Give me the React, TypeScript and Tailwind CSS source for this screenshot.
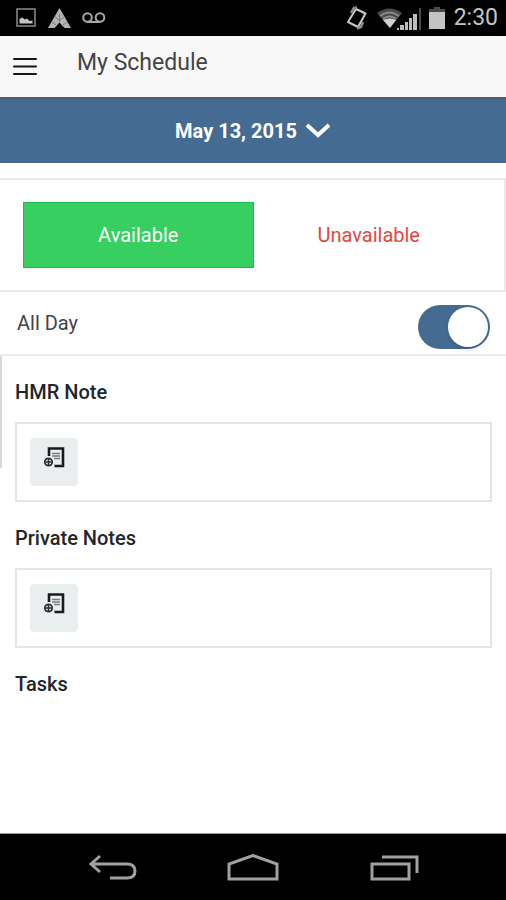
import { useState } from "react";

function StatusBar() {
  return (
    <div className="flex h-9 shrink-0 items-center justify-between bg-black pr-2 pl-4 text-[#c4c4c4]">
      <div className="flex items-center gap-3">
        <svg width="20" height="20" viewBox="0 0 20 20" fill="none" aria-hidden="true">
          <rect x="1" y="1" width="18" height="17" stroke="#8c8c8c" strokeWidth="1.500" />
          <path d="M3.500 15.500V11L6 9.500L9 11.500L11 10.500L13.500 13L16.500 12.500V15.500Z" fill="#c4c4c4" />
        </svg>
        <svg width="24" height="22" viewBox="0 0 24 22" aria-hidden="true">
          <path d="M11.500 1L23 21H16.500L11.500 15.500L6.500 21H0Z" fill="#b4b4b4" />
          <path d="M11.500 7V15M7 10L11 13M16 10L12 13M4 15L8 18M19 15L15 18" stroke="#7a7a7a" strokeWidth="1" />
        </svg>
        <svg className="-ml-0.5" width="24" height="14" viewBox="0 0 24 14" fill="none" stroke="#a8a8a8" strokeWidth="2" aria-hidden="true">
          <circle cx="5.500" cy="6.500" r="4.300" />
          <circle cx="18" cy="6.500" r="4.300" />
          <path d="M5 11H18" />
        </svg>
      </div>
      <div className="flex items-center">
        <svg width="22" height="26" viewBox="0 0 22 26" fill="none" aria-hidden="true">
          <path d="M10 4L19.500 8.500L12 22L2 17Z" stroke="#c9c9c9" strokeWidth="2" strokeLinejoin="round" />
          <path d="M5 8L8 3L11 2.500M17 17L15 22L11 23.500" stroke="#8c8c8c" strokeWidth="2.500" />
        </svg>
        <svg className="ml-2" width="48" height="26" viewBox="0 0 48 26" aria-hidden="true">
          <path d="M1 8Q13.500 -1 26 8L14 23Z" fill="#4b4b4b" />
          <path d="M4 11Q13.500 4 23 11M7 14Q13.500 9 20 14" stroke="#8a8a8a" strokeWidth="2" fill="none" />
          <path d="M7 15Q14 12 20 15L14 23Z" fill="#d0d0d0" />
          <path d="M21 25V23H23V25M24 25V20H28V25M29 25V17H32V25M33 25V13H36V25M37 25V9H41V25" fill="#bdbdbd" />
          <path d="M44 25V3" stroke="#4b4b4b" strokeWidth="2" />
        </svg>
        <svg className="ml-1" width="18" height="24" viewBox="0 0 18 24" aria-hidden="true">
          <path d="M6 1H12V3H17V6H1V3H6Z" fill="#4b4b4b" />
          <path d="M1 6H17V23H1Z" fill="#c4c4c4" />
        </svg>
        <time className="ml-2 text-[23px] leading-9">2:30</time>
      </div>
    </div>
  );
}

function NoteIcon() {
  return (
    <svg width="24" height="24" viewBox="0 0 24 24" fill="none" aria-hidden="true">
      <path d="M7 10V2.500H21V20H12.500" stroke="#171b1e" strokeWidth="2.600" />
      <path d="M10 7.500H18M10 10H18M12 12.500H18" stroke="#777c7e" strokeWidth="1.500" />
      <circle cx="6.500" cy="16" r="3.700" stroke="#2b3033" strokeWidth="1.800" />
      <path d="M6.500 13V19M3.500 16H9.500" stroke="#2b3033" strokeWidth="1.600" />
    </svg>
  );
}

function NoteSection({ title }: { title: string }) {
  return (
    <section className="mb-[22px]">
      <h2 className="mb-4 text-xl leading-7 font-medium text-[#20262d]">{title}</h2>
      <div className="flex h-20 border-2 border-[#e4e5e6] px-[13px] py-[14px]">
        <button type="button" aria-label={`Add to ${title}`} className="flex size-12 justify-center rounded-sm bg-[#eaeeef] pt-2">
          <NoteIcon />
        </button>
      </div>
    </section>
  );
}

export default function App() {
  const [available, setAvailable] = useState(true);
  const [allDay, setAllDay] = useState(true);
  const on = "border border-[#20b950] bg-[#36cf60] text-white";
  const off = "text-[#e5483d]";

  return (
    <div className="flex min-h-screen flex-col bg-white font-['Roboto','Liberation_Sans',sans-serif] text-[#444]">
      <StatusBar />
      <header className="flex h-[61px] shrink-0 items-center bg-[#f8f8f8] px-3">
        <button type="button" aria-label="Open menu" className="flex h-8 w-7 items-center">
          <svg width="26" height="20" viewBox="0 0 26 20" aria-hidden="true">
            <path d="M2 2H24M2 9.500H24M2 17H24" stroke="#151515" strokeWidth="2" strokeLinecap="round" />
          </svg>
        </button>
        <h1 className="mb-2 ml-[37px] text-[23px] leading-8">My Schedule</h1>
      </header>
      <button type="button" className="flex h-[66px] shrink-0 items-center justify-center gap-2 border-t-2 border-[#4d5d6e] bg-[#466b92] text-xl font-bold text-white">
        May 13, 2015
        <svg width="26" height="16" viewBox="0 0 26 16" fill="none" aria-hidden="true">
          <path d="M2 2L13 12L24 2" stroke="white" strokeWidth="4" />
        </svg>
      </button>
      <main className="relative flex grow flex-col">
        <div className="mt-[15px] grid grid-cols-2 border-2 border-l-0 border-[#e9e9e9] pr-5 pl-[23px] py-[22px] text-xl">
          <button type="button" aria-pressed={available} onClick={() => setAvailable(true)} className={`h-[66px] ${available ? on : off}`}>
            Available
          </button>
          <button type="button" aria-pressed={!available} onClick={() => setAvailable(false)} className={`h-[66px] ${available ? off : on}`}>
            Unavailable
          </button>
        </div>
        <label className="flex h-[64px] items-center justify-between border-b-2 border-[#ececec] pr-4 pl-[17px]">
          <span className="text-xl leading-7">All Day</span>
          <input
            type="checkbox"
            role="switch"
            checked={allDay}
            onChange={(e) => setAllDay(e.target.checked)}
            className="mt-2 h-11 w-[72px] appearance-none rounded-full bg-gray-300 p-0.5 before:block before:size-10 before:rounded-full before:bg-white before:shadow-md checked:bg-[#466b92] checked:before:ml-7"
          />
        </label>
        <div className="relative pt-[22px] pr-[14px] pl-[15px]">
          <div className="absolute top-0 left-0 h-28 w-0.5 bg-[#d8d8d8]" />
          <NoteSection title="HMR Note" />
          <NoteSection title="Private Notes" />
          <h2 className="text-xl leading-7 font-medium text-[#20262d]">Tasks</h2>
        </div>
      </main>
      <nav className="flex h-[67px] shrink-0 items-center justify-center gap-[89px] border-t border-[#999] bg-black pt-1">
        <button type="button" aria-label="Back">
          <svg width="50" height="30" viewBox="0 0 50 30" fill="none" stroke="#a0a0a0" strokeWidth="3" aria-hidden="true">
            <path d="M13 2L4 10L13 18M5 10H40Q48 10 48 17Q48 24 40 24H23" />
          </svg>
        </button>
        <button type="button" aria-label="Home">
          <svg width="54" height="30" viewBox="0 0 54 30" fill="none" stroke="#a0a0a0" strokeWidth="3" aria-hidden="true">
            <path d="M3 25V10L27 1.500L51 10V25Z" />
          </svg>
        </button>
        <button type="button" aria-label="Recent apps">
          <svg width="50" height="30" viewBox="0 0 50 30" fill="none" stroke="#a0a0a0" strokeWidth="3" aria-hidden="true">
            <path d="M3 10H40V25H3ZM13 3H48V19" />
          </svg>
        </button>
      </nav>
    </div>
  );
}
